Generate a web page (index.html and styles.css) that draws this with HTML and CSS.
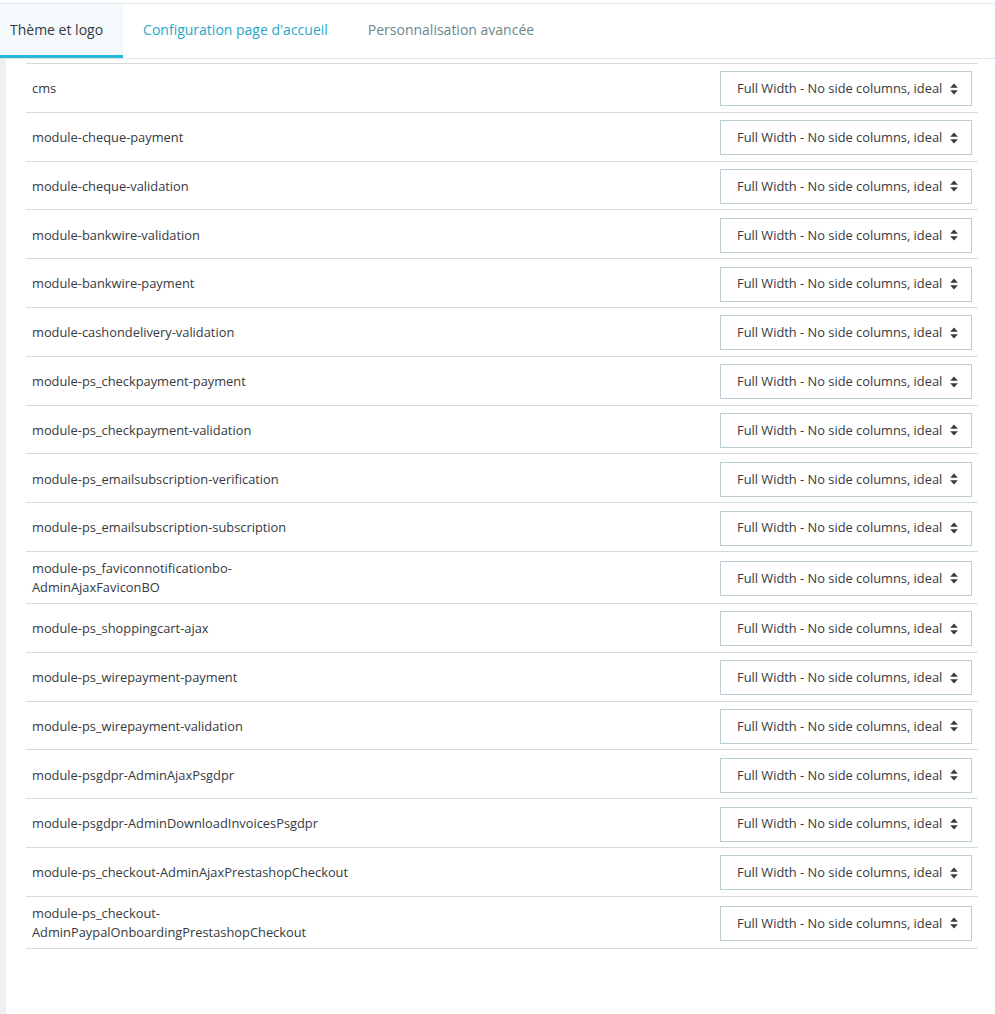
FILE: index.html
```html
<!DOCTYPE html>
<html lang="fr">
<head>
<meta charset="utf-8">
<title>Thème et logo</title>
<link rel="stylesheet" href="styles.css">
</head>
<body>
<div class="top-rule"></div>
<nav class="tabs">
  <a class="tab active">Thème et logo</a>
  <a class="tab link">Configuration page d'accueil</a>
  <a class="tab muted">Personnalisation avancée</a>
</nav>
<div class="panel">
  <div class="strip"></div>
  <div class="content">
    <div class="table" id="table"></div>
  </div>
</div>
<script src="app.js"></script>
</body>
</html>
```
FILE: app.js
```js
var names = [
  "cms",
  "module-cheque-payment",
  "module-cheque-validation",
  "module-bankwire-validation",
  "module-bankwire-payment",
  "module-cashondelivery-validation",
  "module-ps_checkpayment-payment",
  "module-ps_checkpayment-validation",
  "module-ps_emailsubscription-verification",
  "module-ps_emailsubscription-subscription",
  "module-ps_faviconnotificationbo-AdminAjaxFaviconBO",
  "module-ps_shoppingcart-ajax",
  "module-ps_wirepayment-payment",
  "module-ps_wirepayment-validation",
  "module-psgdpr-AdminAjaxPsgdpr",
  "module-psgdpr-AdminDownloadInvoicesPsgdpr",
  "module-ps_checkout-AdminAjaxPrestashopCheckout",
  "module-ps_checkout-AdminPaypalOnboardingPrestashopCheckout"
];
var icon = '<svg class="caret" width="8" height="12" viewBox="0 0 8 12"><path d="M4 0.5 L7.8 4.8 H0.2 Z M4 11.5 L7.8 7.2 H0.2 Z" fill="#363a41"/></svg>';
var html = "";
names.forEach(function (n) {
  html += '<div class="row"><div class="label">' + n +
    '</div><div class="select"><span>Full Width - No side columns, ideal</span>' + icon + '</div></div>';
});
document.getElementById("table").innerHTML = html;
```
FILE: styles.css
```css
html, body {
  margin: 0;
  padding: 0;
  background: #fff;
  font-family: "Open Sans", "Noto Sans", sans-serif;
  color: #363a41;
}
.top-rule {
  height: 3px;
  border-bottom: 1px solid #e3e8ea;
}
.tabs {
  display: flex;
  border-bottom: 1px solid #dfe5e7;
}
.tab {
  display: flex;
  align-items: center;
  height: 51px;
  padding: 0 20px;
  border-bottom: 3px solid transparent;
  font-size: 14px;
  white-space: nowrap;
}
.tab.active {
  padding-left: 10px;
  background: #f4f9fb;
  border-bottom-color: #25b9d7;
  color: #363a41;
}
.tab.link {
  color: #25a9c8;
}
.tab.muted {
  color: #6c868e;
}
.panel {
  display: flex;
  min-height: 955px;
}
.strip {
  width: 6px;
  background: #eef1f2;
}
.content {
  flex: 1;
  padding: 4px 17px 0 20px;
}
.table {
  border-bottom: 1px solid #d3dadc;
}
.row {
  display: flex;
  align-items: center;
  justify-content: space-between;
  min-height: 48.8px;
  box-sizing: border-box;
  padding: 7px 6px 5px 6px;
  border-top: 1px solid #d3dadc;
  font-size: 12.85px;
  line-height: 19.5px;
}
.label {
  width: 322px;
}
.select {
  display: flex;
  align-items: center;
  justify-content: space-between;
  width: 252px;
  height: 35px;
  box-sizing: border-box;
  padding: 0 13px 0 16px;
  border: 1px solid #bbcdd2;
  background: #fff;
  color: #363a41;
  font-size: 12.85px;
}
.caret {
  display: block;
}
```
